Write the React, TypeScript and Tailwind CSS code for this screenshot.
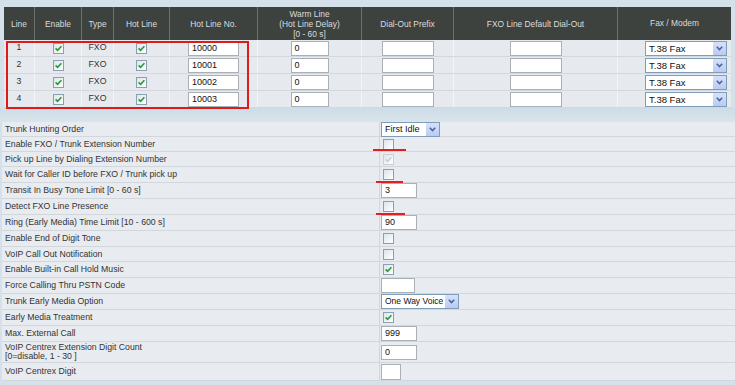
import React from "react";

const Check = ({ checked = false, disabled = false }: { checked?: boolean; disabled?: boolean }) => (
  <span
    className={`inline-flex h-[11px] w-[11px] items-center justify-center border ${
      disabled ? "border-[#c9d0d6]" : "border-[#8a9fb2]"
    } bg-linear-to-br from-[#dde5ec] to-white`}
  >
    {checked && (
      <svg width="9" height="9" viewBox="0 0 9 9">
        <path
          d="M1.6 4.4 L3.6 6.4 L7.4 2.2"
          stroke={disabled ? "#cfcfcf" : "#2a9a34"}
          strokeWidth="1.6"
          fill="none"
        />
      </svg>
    )}
  </span>
);

const Sel = ({ value, w, t = "text-[9.5px]" }: { value: string; w: string; t?: string }) => (
  <div className={`flex h-[15px] items-stretch border border-[#7f9db9] bg-white ${w}`}>
    <span className={`flex-1 overflow-hidden whitespace-nowrap pl-[3px] ${t} leading-[13px] text-[#111]`}>{value}</span>
    <span className="flex w-[14px] items-center justify-center border-l border-white bg-linear-to-b from-[#d6e1fb] to-[#b9cbf4]">
      <svg width="7" height="5" viewBox="0 0 7 5">
        <path d="M0.8 0.8 L3.5 3.6 L6.2 0.8" stroke="#4b6296" strokeWidth="1.5" fill="none" />
      </svg>
    </span>
  </div>
);

const Inp = ({ value, w, h = "h-[15px]" }: { value: string; w: string; h?: string }) => (
  <div className={`${w} ${h} border border-[#a9b0b8] bg-white pl-[3px] text-[9px] leading-[13px] text-[#111]`}>{value}</div>
);

const cols = "grid grid-cols-[31px_47px_32px_56px_88px_104px_92px_164px_113px]";

type Row = { label: string; h: string; ctl: React.ReactNode };

const rows: Row[] = [
  { label: "Trunk Hunting Order", h: "h-[15px]", ctl: <div className="ml-[1px]"><Sel value="First Idle" w="w-[59px]" t="text-[9px]" /></div> },
  { label: "Enable FXO / Trunk Extension Number", h: "h-[15px]", ctl: <div className="ml-[3px] flex"><Check /></div> },
  { label: "Pick up Line by Dialing Extension Number", h: "h-[15px]", ctl: <div className="ml-[3px] flex"><Check checked disabled /></div> },
  { label: "Wait for Caller ID before FXO / Trunk pick up", h: "h-[16px]", ctl: <div className="ml-[3px] flex"><Check /></div> },
  { label: "Transit In Busy Tone Limit [0 - 60 s]", h: "h-[16px]", ctl: <div className="ml-[1px]"><Inp value="3" w="w-[36px]" /></div> },
  { label: "Detect FXO Line Presence", h: "h-[16px]", ctl: <div className="ml-[3px] flex"><Check /></div> },
  { label: "Ring (Early Media) Time Limit [10 - 600 s]", h: "h-[16px]", ctl: <div className="ml-[1px]"><Inp value="90" w="w-[36px]" /></div> },
  { label: "Enable End of Digit Tone", h: "h-[16px]", ctl: <div className="ml-[3px] flex"><Check /></div> },
  { label: "VoIP Call Out Notification", h: "h-[15px]", ctl: <div className="ml-[3px] flex"><Check /></div> },
  { label: "Enable Built-in Call Hold Music", h: "h-[16px]", ctl: <div className="ml-[3px] flex"><Check checked /></div> },
  { label: "Force Calling Thru PSTN Code", h: "h-[16px]", ctl: <div className="ml-[1px]"><Inp value="" w="w-[34px]" /></div> },
  { label: "Trunk Early Media Option", h: "h-[16px]", ctl: <div className="ml-[1px]"><Sel value="One Way Voice" w="w-[78px]" t="text-[8.5px]" /></div> },
  { label: "Early Media Treatment", h: "h-[16px]", ctl: <div className="ml-[3px] flex"><Check checked /></div> },
  { label: "Max. External Call", h: "h-[16px]", ctl: <div className="ml-[1px]"><Inp value="999" w="w-[36px]" /></div> },
  {
    label: "VoIP Centrex Extension Digit Count\n[0=disable, 1 - 30 ]",
    h: "h-[21px]",
    ctl: <div className="ml-[1px]"><Inp value="0" w="w-[36px]" /></div>,
  },
  { label: "VoIP Centrex Digit", h: "h-[18px]", ctl: <div className="ml-[1px]"><Inp value="" w="w-[20px]" h="h-[16px]" /></div> },
];

export default function App() {
  const head = "flex items-center justify-center border-r border-[#6c706c] text-center leading-[10px]";
  const cell = "flex items-center justify-center border-r border-[#f3f5f7]";
  return (
    <div className="relative h-[385px] w-[735px] overflow-hidden bg-[#d5e1ea] font-['Liberation_Sans',Arial,sans-serif] text-[8.7px] text-[#333]">
      <div className="px-[4px] pt-[7px]">
        <div className={`${cols} h-[33px] bg-[#3e423e] text-[8.4px] text-[#dcdcdc]`}>
          <div className={head}>Line</div>
          <div className={head}>Enable</div>
          <div className={head}>Type</div>
          <div className={head}>Hot Line</div>
          <div className={head}>Hot Line No.</div>
          <div className={head}>
            Warm Line
            <br />
            (Hot Line Delay)
            <br />
            [0 - 60 s]
          </div>
          <div className={head}>Dial-Out Prefix</div>
          <div className={head}>FXO Line Default Dial-Out</div>
          <div className="flex items-center justify-center">Fax / Modem</div>
        </div>
        {[0, 1, 2, 3].map((i) => (
          <div key={i} className={`${cols} h-[17px] border-b border-[#d3d8dd] bg-[#e6e9ee]`}>
            <div className={cell}>{i + 1}</div>
            <div className={cell}><Check checked /></div>
            <div className={cell}>FXO</div>
            <div className={cell}><Check checked /></div>
            <div className={cell}><Inp value={`1000${i}`} w="w-[51px]" /></div>
            <div className={cell}><Inp value="0" w="w-[38px]" /></div>
            <div className={cell}><Inp value="" w="w-[52px]" /></div>
            <div className={cell}><Inp value="" w="w-[52px]" /></div>
            <div className="flex items-center pl-[27px]"><Sel value="T.38 Fax" w="w-[82px]" /></div>
          </div>
        ))}
      </div>
      <div className="h-[14px] bg-linear-to-b from-[#cddce6] to-[#d9e4eb]" />
      <div className="ml-[2px] bg-[#e8ebef]">
        {rows.map((r, i) => (
          <div key={i} className={`flex ${r.h} border-b border-[#d2d7dc]`}>
            <div className="flex w-[378px] items-center whitespace-pre-line border-r border-[#d2d7dc] pl-[3px] leading-[9px]">
              {r.label}
            </div>
            <div className="flex flex-1 items-center">{r.ctl}</div>
          </div>
        ))}
      </div>

      {/* red highlight overlays */}
      <div className="absolute left-[6px] top-[41px] h-[68px] w-[243px] border-2 border-[#dd1b1b]" />
      <div className="absolute left-[373px] top-[149px] h-[2px] w-[33px] bg-[#e02020]" />
      <div className="absolute left-[376px] top-[181px] h-[2px] w-[27px] bg-[#e02020]" />
      <div className="absolute left-[376px] top-[213px] h-[2px] w-[29px] bg-[#e02020]" />
    </div>
  );
}
